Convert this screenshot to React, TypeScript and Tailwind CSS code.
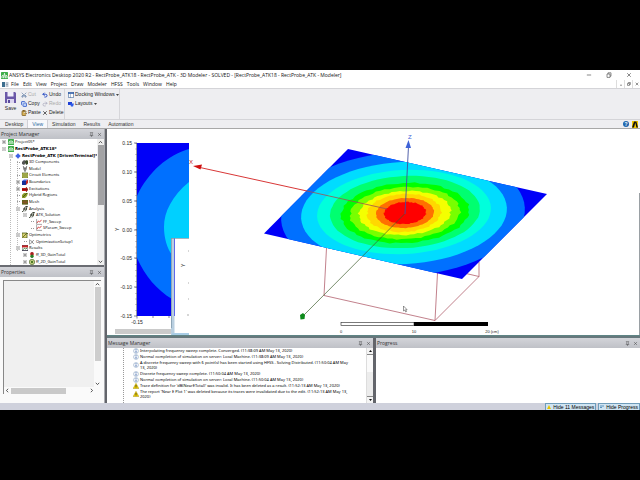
import React from "react";
import {
  Scissors,
  Copy,
  ClipboardPaste,
  Undo2,
  Redo2,
  X,
  Minus,
  Pin,
} from "lucide-react";

const UI = "font-['Open_Sans','Noto_Sans',sans-serif]";
const ARIAL = "font-['Liberation_Sans',Arial,sans-serif]";

/* ---------- small icons ---------- */

function AppIcon({ className }: { className?: string }) {
  return (
    <svg viewBox="0 0 8 8" className={className} aria-hidden="true">
      <rect width="8" height="8" rx="0.6" fill="#3fae49" />
      <path d="M1 7V4.5l1.5-1V7M3 7l1-5.6L5 7M5.6 7V3.5L7 4.5V7" fill="none" stroke="#fff" strokeWidth="0.8" />
    </svg>
  );
}

type Glyph =
  | "project"
  | "design"
  | "box"
  | "model"
  | "circuit"
  | "bound"
  | "excite"
  | "hybrid"
  | "mesh"
  | "analysis"
  | "sweep"
  | "opt"
  | "setup"
  | "results"
  | "plot"
  | "plot2";

function TreeIcon({ kind }: { kind: Glyph }) {
  const art: Record<Glyph, React.ReactNode> = {
    project: (
      <>
        <rect x="0" y="0" width="6" height="6" rx="0.5" fill="#3fae49" />
        <path d="M1 5V3l1-1v3M3 1v4M4 5V2l1 1v2" stroke="#fff" strokeWidth="0.6" fill="none" />
      </>
    ),
    design: (
      <>
        <path d="M3 0l1 2 2 1-2 1-1 2-1-2-2-1 2-1z" fill="#1e3fd0" />
        <rect x="1.4" y="1.6" width="3.2" height="2.8" fill="#3a63e8" />
      </>
    ),
    box: (
      <>
        <path d="M0 3l2-2 2 1v2L2 6 0 5z" fill="#555" />
        <path d="M3 2l2-1 1 1v3L4 6z" fill="#3b4a2a" />
      </>
    ),
    model: (
      <>
        <path d="M1 0l2 2 2-2v3L3 6 1 3z" fill="#9a9a9a" />
        <path d="M1 0l2 3 2-3M3 3v3" stroke="#444" strokeWidth="0.5" fill="none" />
      </>
    ),
    circuit: (
      <>
        <rect x="0" y="1" width="6" height="5" fill="#c9cf62" />
        <path d="M0 1h6v5H0zM2 2v3M4 2v3" stroke="#4a5a1a" strokeWidth="0.7" fill="none" />
      </>
    ),
    bound: (
      <>
        <rect x="0" y="2" width="4" height="4" fill="#16309a" />
        <path d="M0 2l2-1.6h4L4 2z" fill="#4a6ae0" />
        <path d="M4 2l2-1.6V4L4 6z" fill="#c02a2a" />
      </>
    ),
    excite: (
      <>
        <rect x="0" y="2" width="5" height="3" fill="#c01818" />
        <path d="M0 3.5h6M4 1l2 2.5L4 6" stroke="#7a0c0c" strokeWidth="0.8" fill="none" />
      </>
    ),
    hybrid: (
      <>
        <path d="M0 3l2-2h4L5 4 3 6H0z" fill="#8a9a2a" />
        <path d="M1 5l4-4" stroke="#3a4a10" strokeWidth="0.8" />
      </>
    ),
    mesh: (
      <>
        <rect x="0" y="1" width="6" height="4.6" fill="#566a1c" />
        <path d="M0 3.2h6M2 1v4.6M4 1v4.6" stroke="#c33" strokeWidth="0.4" />
      </>
    ),
    analysis: (
      <path d="M0 5.6c1.5 0 2-1 2.2-2.6S3 .4 5.8.4M1 3h4M4.6.4C5 2 4.4 4 3 5.4" stroke="#2a3222" strokeWidth="0.9" fill="none" />
    ),
    sweep: (
      <>
        <path d="M.6 0v5.4H6" stroke="#555" strokeWidth="0.5" fill="none" />
        <path d="M1 4l1.4-2L3.6 3 5.6.8" stroke="#c22" strokeWidth="0.8" fill="none" />
      </>
    ),
    opt: (
      <>
        <rect x="0" y="1" width="5" height="5" fill="#d8d070" />
        <path d="M0 1h5v5H0zM1 5l4-4 1 1" stroke="#4c5a18" strokeWidth="0.8" fill="none" />
      </>
    ),
    setup: <path d="M1.4 1l3.400 4M4.800 1L1.400 5M.6.4v5.200" stroke="#555" strokeWidth="0.6" fill="none" />,
    results: (
      <>
        <rect x="0" y="0.4" width="6" height="5.2" fill="#fff" stroke="#334" strokeWidth="0.8" />
        <rect x="0" y="0.4" width="6" height="2" fill="#c62222" />
        <path d="M1 4.8l1.4-1.600 1.200.8L5 3" stroke="#2a7a2a" strokeWidth="0.9" fill="none" />
      </>
    ),
    plot: (
      <>
        <circle cx="3" cy="2" r="1.9" fill="#d02020" />
        <circle cx="3" cy="4.2" r="1.7" fill="#2a9a2a" />
        <path d="M3 0v6" stroke="#222" strokeWidth="0.5" />
      </>
    ),
    plot2: (
      <>
        <circle cx="3" cy="3" r="2.7" fill="#c9d48a" stroke="#3c5a20" strokeWidth="0.6" />
        <circle cx="3" cy="3" r="1.2" fill="#4b7a24" />
      </>
    ),
  };
  return (
    <svg viewBox="0 0 6 6" className="size-[6px] shrink-0" aria-hidden="true">
      {art[kind]}
    </svg>
  );
}

/* ---------- title, menu, ribbon ---------- */

function TitleBar() {
  return (
    <header className="flex h-[10px] items-center bg-white px-px text-[#111]">
      <AppIcon className="mr-px size-[7px]" />
      <h1 className="text-[5px] leading-[10px] whitespace-nowrap">
        ANSYS Electronics Desktop 2020 R2 - RectProbe_ATK18 - RectProbe_ATK - 3D Modeler - SOLVED - [RectProbe_ATK18 - RectProbe_ATK - Modeler]
      </h1>
      <div className="ml-auto flex gap-[14px] pr-[7px]">
        <button aria-label="Minimize">
          <Minus className="size-[6px]" strokeWidth={2} />
        </button>
        <button aria-label="Restore">
          <svg viewBox="0 0 6 6" className="size-[6px]" fill="none" stroke="#444" strokeWidth="0.6">
            <path d="M1 2h3v3.4H1zM2 2V.8h3v3.4H4" />
          </svg>
        </button>
        <button aria-label="Close">
          <X className="size-[6px]" strokeWidth={2} />
        </button>
      </div>
    </header>
  );
}

const MENUS = ["File", "Edit", "View", "Project", "Draw", "Modeler", "HFSS", "Tools", "Window", "Help"];

function MenuBar() {
  return (
    <nav className="flex h-[8px] items-center bg-white pl-[2px] text-[#111]">
      <svg viewBox="0 0 7 5" className="mr-[2px] h-[5px] w-[7px]" aria-hidden="true">
        <rect width="7" height="5" fill="#dfe6ee" />
        <path d="M0 0h3v5H0z" fill="#3d6f8f" />
        <path d="M4 1h2M4 2.5h2M4 4h2" stroke="#678" strokeWidth="0.6" />
      </svg>
      <div className="flex gap-[4px]">
        {MENUS.map((m) => (
          <button key={m} className="text-[5px] leading-[8px]">
            {m}
          </button>
        ))}
      </div>
      <div className="ml-auto flex">
        {["Minimize window", "Restore window", "Close window"].map((l, i) => (
          <button key={l} aria-label={l} className="flex h-[8px] w-[8px] items-center justify-center border-l border-[#ddd] text-[#666]">
            <svg viewBox="0 0 4 4" className="size-[4px]" fill="none" stroke="currentColor" strokeWidth="0.7">
              {i === 0 && <path d="M1 3.2h2" />}
              {i === 1 && <path d="M.5 1.4h2v2h-2zM1.4 1.4V.5h2v2h-.9" />}
              {i === 2 && <path d="M.7.7l2.6 2.6M3.3.7L.7 3.3" />}
            </svg>
          </button>
        ))}
      </div>
    </nav>
  );
}

function Tool({ icon, label, off, caret }: { icon: React.ReactNode; label: string; off?: boolean; caret?: boolean }) {
  return (
    <button className={`flex items-center gap-px text-[5px] leading-[9px] whitespace-nowrap ${off ? "text-[#aaa]" : "text-[#222]"}`}>
      {icon}
      {label}
      {caret && (
        <svg viewBox="0 0 3 2" className="h-[2px] w-[3px]" aria-hidden="true">
          <path d="M0 0h3L1.5 2z" fill="#444" />
        </svg>
      )}
    </button>
  );
}

function Ribbon() {
  return (
    <div className={`flex h-[31px] border-t border-[#d4d4d8] bg-[#eeeef1] ${ARIAL}`}>
      <button className="flex w-[21px] flex-col items-center pt-[2px] text-[5px] leading-[7px] text-[#222]">
        <svg viewBox="0 0 13 13" className="mb-px size-[13px]" aria-hidden="true">
          <path d="M1 1h10l1 1v10H1z" fill="#6a58a8" />
          <path d="M3.500 1h6v4.500h-6z" fill="#f0eefa" />
          <path d="M3 8h7v4H3z" fill="#dcd6f0" />
          <path d="M4 9h2v3H4z" fill="#5a4a9c" />
        </svg>
        Save
      </button>
      <div className="flex w-[21px] flex-col pt-px">
        <Tool off label="Cut" icon={<Scissors className="size-[6px] -rotate-90" color="#6f8aac" strokeWidth={3} />} />
        <Tool label="Copy" icon={<Copy className="size-[6px]" color="#2d55c8" fill="#bcd0f5" strokeWidth={3} />} />
        <Tool label="Paste" icon={<ClipboardPaste className="size-[6px]" color="#7a5a1e" fill="#d9b45a" strokeWidth={3} />} />
      </div>
      <div className="flex w-[23px] flex-col border-r border-[#d6d6da] pt-px">
        <Tool label="Undo" icon={<Undo2 className="size-[6px]" color="#2b4fc4" strokeWidth={4} />} />
        <Tool off label="Redo" icon={<Redo2 className="size-[6px]" color="#aaaabc" strokeWidth={3} />} />
        <Tool label="Delete" icon={<X className="size-[6px]" color="#333" strokeWidth={3} />} />
      </div>
      <div className="flex flex-col border-r border-[#d6d6da] pt-px pl-[3px]">
        <Tool
          caret
          label="Docking Windows"
          icon={
            <svg viewBox="0 0 6 6" className="size-[6px]" aria-hidden="true">
              <rect x="0.3" y="0.5" width="5.4" height="5" fill="#fff" stroke="#456a9c" strokeWidth="0.6" />
              <path d="M0 0.4h6v1.4H0z" fill="#2c5ca8" />
              <path d="M2.4 1.8v4" stroke="#456a9c" strokeWidth="0.5" />
            </svg>
          }
        />
        <Tool
          caret
          label="Layouts"
          icon={
            <svg viewBox="0 0 6 6" className="size-[6px]" aria-hidden="true">
              <path d="M0 1h4v3H0z" fill="#1d3fd6" />
              <path d="M2 2.4h4L5 5.6H3z" fill="#2f5be8" />
            </svg>
          }
        />
      </div>
    </div>
  );
}

const TABS = ["Desktop", "View", "Simulation", "Results", "Automation"];

function RibbonTabs() {
  return (
    <div className={`flex h-[10px] items-center border-t border-b border-t-[#d4d4d8] border-b-[#a8a8a8] bg-[#eeeef1] pl-px ${ARIAL}`}>
      {TABS.map((t) => (
        <button
          key={t}
          className={`h-full px-[4px] text-[5px] leading-[8px] ${t === "View" ? "border-x border-[#d0d0d6] bg-[#f8f8fb] text-[#2c6aa0]" : "text-[#333]"}`}
        >
          {t}
        </button>
      ))}
      <div className="ml-auto flex items-center gap-[3px] pr-[2px]">
        <button aria-label="Help" className="flex size-[6px] items-center justify-center rounded-full bg-[#1f66ae] text-[5px] leading-[6px] font-bold text-white">
          ?
        </button>
        <svg viewBox="0 0 6 7" className="h-[7px] w-[6px]" aria-hidden="true">
          <rect width="6" height="7" fill="#f2c800" />
          <path d="M0 6.6L2 .4h1.6L2 6.6zM3 .4h1.4L6 6.6H4.4z" fill="#111" />
        </svg>
      </div>
    </div>
  );
}

/* ---------- docked panels ---------- */

function PanelHeader({ title }: { title: string }) {
  return (
    <div className="flex h-[10px] shrink-0 items-center bg-linear-to-b from-[#d3d4d9] to-[#bfc1c7] px-px text-[#333]">
      <h2 className="text-[5px] leading-[10px]">{title}</h2>
      <button aria-label={`Pin ${title}`} className="ml-auto">
        <Pin className="size-[5px]" strokeWidth={2} />
      </button>
      <button aria-label={`Close ${title}`} className="mr-px ml-[3px]">
        <X className="size-[5px]" strokeWidth={2} />
      </button>
    </div>
  );
}

function Chevron({ dir }: { dir: "up" | "down" | "left" | "right" }) {
  const d = { up: "M.8 3.2L2.5 1.4l1.7 1.8", down: "M.8 1.8l1.7 1.8 1.7-1.8", left: "M3.2.8L1.4 2.5l1.8 1.7", right: "M1.8.8l1.8 1.7-1.8 1.7" }[dir];
  return (
    <svg viewBox="0 0 5 5" className="size-[5px] shrink-0" fill="none" stroke="#333" strokeWidth="0.8" aria-hidden="true">
      <path d={d} />
    </svg>
  );
}

interface Node {
  level: number;
  label: string;
  icon: Glyph;
  toggle?: "+" | "-";
  bold?: boolean;
}

const TREE: Node[] = [
  { level: 0, label: "Project05*", icon: "project", toggle: "+" },
  { level: 0, label: "RectProbe_ATK18*", icon: "project", toggle: "-", bold: true },
  { level: 1, label: "RectProbe_ATK [DrivenTerminal]*", icon: "design", toggle: "-", bold: true },
  { level: 2, label: "3D Components", icon: "box" },
  { level: 2, label: "Model", icon: "model" },
  { level: 2, label: "Circuit Elements", icon: "circuit" },
  { level: 2, label: "Boundaries", icon: "bound", toggle: "+" },
  { level: 2, label: "Excitations", icon: "excite", toggle: "+" },
  { level: 2, label: "Hybrid Regions", icon: "hybrid" },
  { level: 2, label: "Mesh", icon: "mesh" },
  { level: 2, label: "Analysis", icon: "analysis", toggle: "-" },
  { level: 3, label: "ATK_Solution", icon: "analysis", toggle: "-" },
  { level: 4, label: "FF_Sweep", icon: "sweep" },
  { level: 4, label: "SParam_Sweep", icon: "sweep" },
  { level: 2, label: "Optimetrics", icon: "opt", toggle: "-" },
  { level: 3, label: "OptimizationSetup1", icon: "setup" },
  { level: 2, label: "Results", icon: "results", toggle: "-" },
  { level: 3, label: "ff_3D_GainTotal", icon: "plot", toggle: "+" },
  { level: 3, label: "ff_2D_GainTotal", icon: "plot2", toggle: "+" },
];

const INDENT = ["pl-[2px]", "pl-[9px]", "pl-[16px]", "pl-[23px]", "pl-[30px]"];

function ProjectTree() {
  return (
    <div className="flex h-[126px] bg-white">
      <ul role="tree" aria-label="Projects" className="relative flex min-w-0 flex-1 flex-col overflow-hidden">
        <li role="presentation" className="absolute top-[20px] bottom-0 left-[10px] border-l border-dotted border-[#bbb]" />
        <li role="presentation" className="absolute top-[22px] bottom-[14px] left-[17px] border-l border-dotted border-[#bbb]" />
        {TREE.map((n) => (
          <li key={n.label} role="treeitem" className={`relative flex flex-1 items-center ${INDENT[n.level]}`}>
            {n.toggle ? (
              <button aria-label={`Toggle ${n.label}`} className="mr-[2px] flex size-[4px] items-center justify-center">
                <svg viewBox="0 0 4 4" className="size-[4px]" fill="#fff" stroke="#888" strokeWidth="0.5">
                  <path d="M.3.3h3.4v3.4H.3z" />
                  <path d={n.toggle === "+" ? "M1 2h2M2 1v2" : "M1 2h2"} stroke="#222" />
                </svg>
              </button>
            ) : (
              <span className="mr-[2px] ml-px w-[3px] border-t border-dotted border-[#999]" />
            )}
            <TreeIcon kind={n.icon} />
            <span
              className={`ml-px text-[4px] leading-[6px] whitespace-nowrap text-black ${n.bold ? "font-['DejaVu_Sans','Noto_Sans',sans-serif] font-bold" : ""}`}
            >
              {n.label}
            </span>
          </li>
        ))}
      </ul>
      <div className="flex w-[7px] flex-col items-center bg-[#f0f0f0] py-px">
        <Chevron dir="up" />
        <div className="h-[60px] w-[6px] bg-[#a3a3a5]" />
        <div className="flex-1" />
        <Chevron dir="down" />
      </div>
    </div>
  );
}

function Properties() {
  return (
    <div className="flex flex-1 bg-[#fafafa] px-[3px] pt-[3px] pb-[9px]">
      <div className="flex flex-1 flex-col border-t border-l border-[#888] bg-[#f0f0f0]">
        <div className="flex flex-1">
          <div className="flex-1" />
          <div className="flex w-[7px] flex-col items-center bg-[#fafafa] pt-px pb-px">
            <Chevron dir="up" />
            <div className="h-[74px] w-[6px] bg-[#cdcdcd]" />
            <div className="flex-1" />
            <Chevron dir="down" />
          </div>
        </div>
        <div className="flex h-[7px] items-center bg-[#fafafa] px-px pr-[7px]">
          <Chevron dir="left" />
          <div className="ml-px h-[6px] w-[55px] bg-[#c9c9c9]" />
          <div className="flex-1" />
          <Chevron dir="right" />
        </div>
      </div>
    </div>
  );
}

/* ---------- 3D view ---------- */

/* Closed outline of one field contour; `rough` adds the mesh raggedness. */
function contour(cx: number, cy: number, rx: number, ry: number, rough: number) {
  const steps = 72;
  const t = (-3 * Math.PI) / 180;
  const pts: string[] = [];
  for (let i = 0; i < steps; i++) {
    const a = (i / steps) * 2 * Math.PI;
    const k = 1 + (rough * (Math.sin(i * 2.7 + rx) + Math.sin(i * 1.3 + ry))) / rx;
    const u = Math.cos(a) * rx * k;
    const v = Math.sin(a) * ry * k;
    pts.push(`${(cx + u * Math.cos(t) - v * Math.sin(t)).toFixed(1)},${(cy + u * Math.sin(t) + v * Math.cos(t)).toFixed(1)}`);
  }
  return pts.join(" ");
}

const BANDS = [
  { cx: 403, cy: 214, rx: 122, ry: 62, rough: 0, fill: "#0070ff" },
  { cx: 404, cy: 213, rx: 103, ry: 51, rough: 0, fill: "#00dcff" },
  { cx: 404, cy: 212, rx: 87, ry: 42, rough: 0, fill: "#00ffdc" },
  { cx: 405, cy: 212, rx: 75, ry: 36, rough: 0.2, fill: "#00ff70" },
  { cx: 405, cy: 213, rx: 64, ry: 30, rough: 0.8, fill: "#00ff00" },
  { cx: 405, cy: 213, rx: 55, ry: 26, rough: 0.8, fill: "#78ff00" },
  { cx: 405, cy: 213, rx: 46, ry: 22, rough: 0.8, fill: "#f4ff00" },
  { cx: 404, cy: 213, rx: 37, ry: 19, rough: 0.7, fill: "#ffd800" },
  { cx: 405, cy: 213, rx: 29, ry: 15, rough: 0.3, fill: "#ff7000" },
  { cx: 405, cy: 213, rx: 21, ry: 11, rough: 0.5, fill: "#ff0000" },
];

const AXIS = [
  { y: 143, t: "0.15" },
  { y: 172, t: "0.10" },
  { y: 201, t: "0.05" },
  { y: 230, t: "0.00" },
  { y: 258, t: "-0.05" },
  { y: 287, t: "-0.10" },
  { y: 316, t: "-0.15" },
];

function Viewport() {
  return (
    <main className="min-h-0 border-b border-[#5f8585] bg-white">
      <svg viewBox="107 129 533 206" className={`block w-full ${ARIAL}`} role="img" aria-label="Near field on rectangular probe">
        <defs>
          <clipPath id="sheet">
            <path d="M348 149L547 194 462 279 264 233.5z" />
          </clipPath>
        </defs>
        <path d="M639.500 193V335" stroke="#9aa0a4" strokeWidth="1" />

        {/* 2D field report behind the model */}
        <path d="M137 143h52v95h-14v78h-38z" fill="#0000f8" />
        <path d="M189 149C168 155 148 172 137 196V258C145 276 157 290 172 299V238h17z" fill="#0070ff" />
        <path d="M189 182C172 196 164 212 164 227C164 238 167 248 172 255V238h17z" fill="#00d0ff" />
        <path d="M136.5 143v173" stroke="#335" strokeWidth="0.5" />
        <path d="M136 143v173" stroke="#556" strokeWidth="1.2" strokeDasharray="0.5 5.27" />
        {AXIS.map((a) => (
          <g key={a.t}>
            <path d={`M134 ${a.y}h3`} stroke="#335" strokeWidth="0.6" />
            <text x="132" y={a.y + 2} fontSize="5" textAnchor="end" fill="#222">
              {a.t}
            </text>
          </g>
        ))}
        <path d="M153 316v2M169 316v2M137 316v2.500" stroke="#335" strokeWidth="0.6" />
        <text x="137" y="324" fontSize="5" textAnchor="middle" fill="#222">
          -0.15
        </text>
        <text x="116" y="232" fontSize="5" fill="#222" transform="rotate(-90 117 230)">
          Y
        </text>
        <rect x="115" y="329" width="57" height="5" fill="#cacaca" />

        {/* overlapping report window */}
        <rect x="175" y="238" width="14" height="97" fill="#fff" />
        <rect x="171" y="238" width="3.500" height="97" fill="#b9cfe0" />
        <path d="M171.500 238v90M171 238.500h18" stroke="#7d93a5" strokeWidth="0.7" />
        <rect x="172" y="333" width="17" height="2" fill="#a9cde6" />
        <path d="M188 251h1M188 283h1M188 299h1M187 315h2" stroke="#777" strokeWidth="0.6" />
        <text x="183" y="267" fontSize="5" fill="#222" transform="rotate(-90 184 266)">
          Y
        </text>

        {/* air box */}
        <path
          d="M326.500 248L324 295.500 435 320.500 437.500 273M435 320.500L479 276.500V262M479 276.500L466 273.500"
          fill="none"
          stroke="#a84a5a"
          strokeWidth="0.7"
        />

        {/* field sheet */}
        <g clipPath="url(#sheet)">
          <rect x="260" y="145" width="290" height="140" fill="#0000f8" />
          {BANDS.map((b) => (
            <polygon key={b.fill} points={contour(b.cx, b.cy, b.rx, b.ry, b.rough)} fill={b.fill} />
          ))}
        </g>

        {/* axes */}
        <path d="M387 209L307 191" stroke="#a05050" strokeWidth="0.8" />
        <path d="M307 191L200 167.500" stroke="#d42020" strokeWidth="0.9" />
        <path d="M193 166l9-1.500-1.500 5z" fill="#d01010" />
        <text x="189" y="164" fontSize="6" fill="#c01818">
          X
        </text>
        <path d="M404.500 214L303 316" stroke="#3d5c2c" strokeWidth="0.7" />
        <path d="M300 315l3-2 2 2-0.500 4-4 0.500z" fill="#0c8a1a" />
        <path d="M405 214L408.500 146" stroke="#4050a0" strokeWidth="0.9" />
        <path d="M408.500 140l2.500 8h-5.500z" fill="#3f63d8" />
        <text x="408" y="139" fontSize="6" fill="#3f63d8">
          Z
        </text>

        {/* pointer */}
        <path d="M403.500 306v5l1.200-1 1 2 .9-.5-1-1.800h1.500z" fill="#fff" stroke="#333" strokeWidth="0.5" />

        {/* scale bar */}
        <rect x="341" y="322.500" width="73" height="3" fill="#fff" stroke="#222" strokeWidth="0.6" />
        <rect x="414" y="322" width="74" height="4" fill="#000" />
        <g fontSize="4" fill="#222" textAnchor="middle">
          <text x="341" y="333">0</text>
          <text x="414" y="333">10</text>
          <text x="492" y="333">20 (cm)</text>
        </g>
      </svg>
    </main>
  );
}

/* ---------- messages ---------- */

const MESSAGES: { kind: "info" | "warn"; text: string }[] = [
  { kind: "info", text: "Interpolating frequency sweep complete. Converged. (11:38:09 AM May 13, 2020)" },
  { kind: "info", text: "Normal completion of simulation on server: Local Machine. (11:38:09 AM May 13, 2020)" },
  { kind: "info", text: "A discrete frequency sweep with 6 point(s) has been started using HFSS - Solving Distributed. (11:50:04 AM May 13, 2020)" },
  { kind: "info", text: "Discrete frequency sweep complete. (11:50:04 AM May 13, 2020)" },
  { kind: "info", text: "Normal completion of simulation on server: Local Machine. (11:50:04 AM May 13, 2020)" },
  { kind: "warn", text: "Trace definition for 'dB(NearETotal)' was invalid. It has been deleted as a result. (11:52:13 AM May 13, 2020)" },
  { kind: "warn", text: "The report 'Near E Plot 1' was deleted because its traces were invalidated due to the edit. (11:52:13 AM May 13, 2020)" },
];

function WarnIcon() {
  return (
    <svg viewBox="0 0 6 6" className="size-[6px] shrink-0" aria-hidden="true">
      <path d="M3 .3L5.900 5.600H.1z" fill="#f0d000" stroke="#8a7a00" strokeWidth="0.4" />
      <path d="M3 2v2M3 4.500v.6" stroke="#222" strokeWidth="0.7" />
    </svg>
  );
}

function InfoIcon() {
  return (
    <svg viewBox="0 0 6 6" className="size-[6px] shrink-0" aria-hidden="true">
      <circle cx="3" cy="3" r="2.400" fill="#fff" stroke="#6f8fb5" strokeWidth="0.5" />
      <path d="M3 1.300v.7M3 2.500v2.200" stroke="#1f4fa0" strokeWidth="0.8" />
    </svg>
  );
}

function MessageManager() {
  return (
    <section className="flex w-[266px] shrink-0 flex-col bg-white">
      <PanelHeader title="Message Manager" />
      <div className="flex flex-1">
        <div className="ml-[16px] flex-1 border-l border-dotted border-[#999] pl-[9px] font-['Noto_Sans','Open_Sans',sans-serif]">
          <ul>
            {MESSAGES.map((m, i) => (
              <li key={i} className="flex items-center gap-px pb-px text-black">
                <span className="flex h-[5px] shrink-0 items-center">{m.kind === "info" ? <InfoIcon /> : <WarnIcon />}</span>
                <span className="w-[210px] text-[4px] leading-[5px]">{m.text}</span>
              </li>
            ))}
          </ul>
        </div>
        <div className="flex w-[7px] flex-col items-center border-l border-[#ddd] bg-[#f4f4f4]">
          <svg viewBox="0 0 5 6" className="h-[6px] w-[5px]" aria-hidden="true">
            <path d="M1 4h3L2.500 2z" fill="#111" />
          </svg>
          <div className="h-[18px] w-full border-t border-[#888] bg-[#fafafa]" />
          <div className="w-full flex-1 border-b border-[#888] bg-[#ececec]" />
          <svg viewBox="0 0 5 6" className="h-[6px] w-[5px]" aria-hidden="true">
            <path d="M1 2h3L2.500 4z" fill="#111" />
          </svg>
        </div>
      </div>
    </section>
  );
}

function StatusBar() {
  const btn = "flex h-full items-center gap-[2px] border border-b-0 border-[#6f9cba] bg-[#cfe4f2] px-px text-[5px] leading-[6px] text-black whitespace-nowrap";
  return (
    <footer className={`flex h-[7px] justify-end gap-[2px] bg-[#cfd1dc] ${ARIAL}`}>
      <button className={btn}>
        <svg viewBox="0 0 4 4" className="size-[4px]" aria-hidden="true">
          <path d="M2 0l2 4H0z" fill="#e8c400" />
        </svg>
        Hide 11 Messages
      </button>
      <button className={btn}>
        <svg viewBox="0 0 4 4" className="size-[4px]" aria-hidden="true">
          <path d="M0 1h4M0 2.500h2" stroke="#3f7fb0" strokeWidth="0.8" />
        </svg>
        Hide Progress
      </button>
    </footer>
  );
}

export default function App() {
  return (
    <div className={`flex min-h-screen flex-col bg-black py-[70px] ${UI}`}>
      <TitleBar />
      <MenuBar />
      <Ribbon />
      <RibbonTabs />
      <div className="flex flex-1">
        <aside className="flex w-[104px] shrink-0 flex-col bg-[#e8e8ea]">
          <PanelHeader title="Project Manager" />
          <ProjectTree />
          <div className="h-[2px] bg-[#6a6c72]" />
          <PanelHeader title="Properties" />
          <Properties />
        </aside>
        <div className="w-[3px] shrink-0 border-l border-[#a9abb0] bg-[#63656b]" />
        <div className="flex min-w-0 flex-1 flex-col">
          <Viewport />
          <div className="h-[2px] shrink-0 bg-[#66787c]" />
          <div className="flex flex-1">
            <MessageManager />
            <div className="w-[3px] shrink-0 bg-[#63656b]" />
            <section className="flex min-w-0 flex-1 flex-col bg-white">
              <PanelHeader title="Progress" />
            </section>
          </div>
        </div>
      </div>
      <StatusBar />
    </div>
  );
}
